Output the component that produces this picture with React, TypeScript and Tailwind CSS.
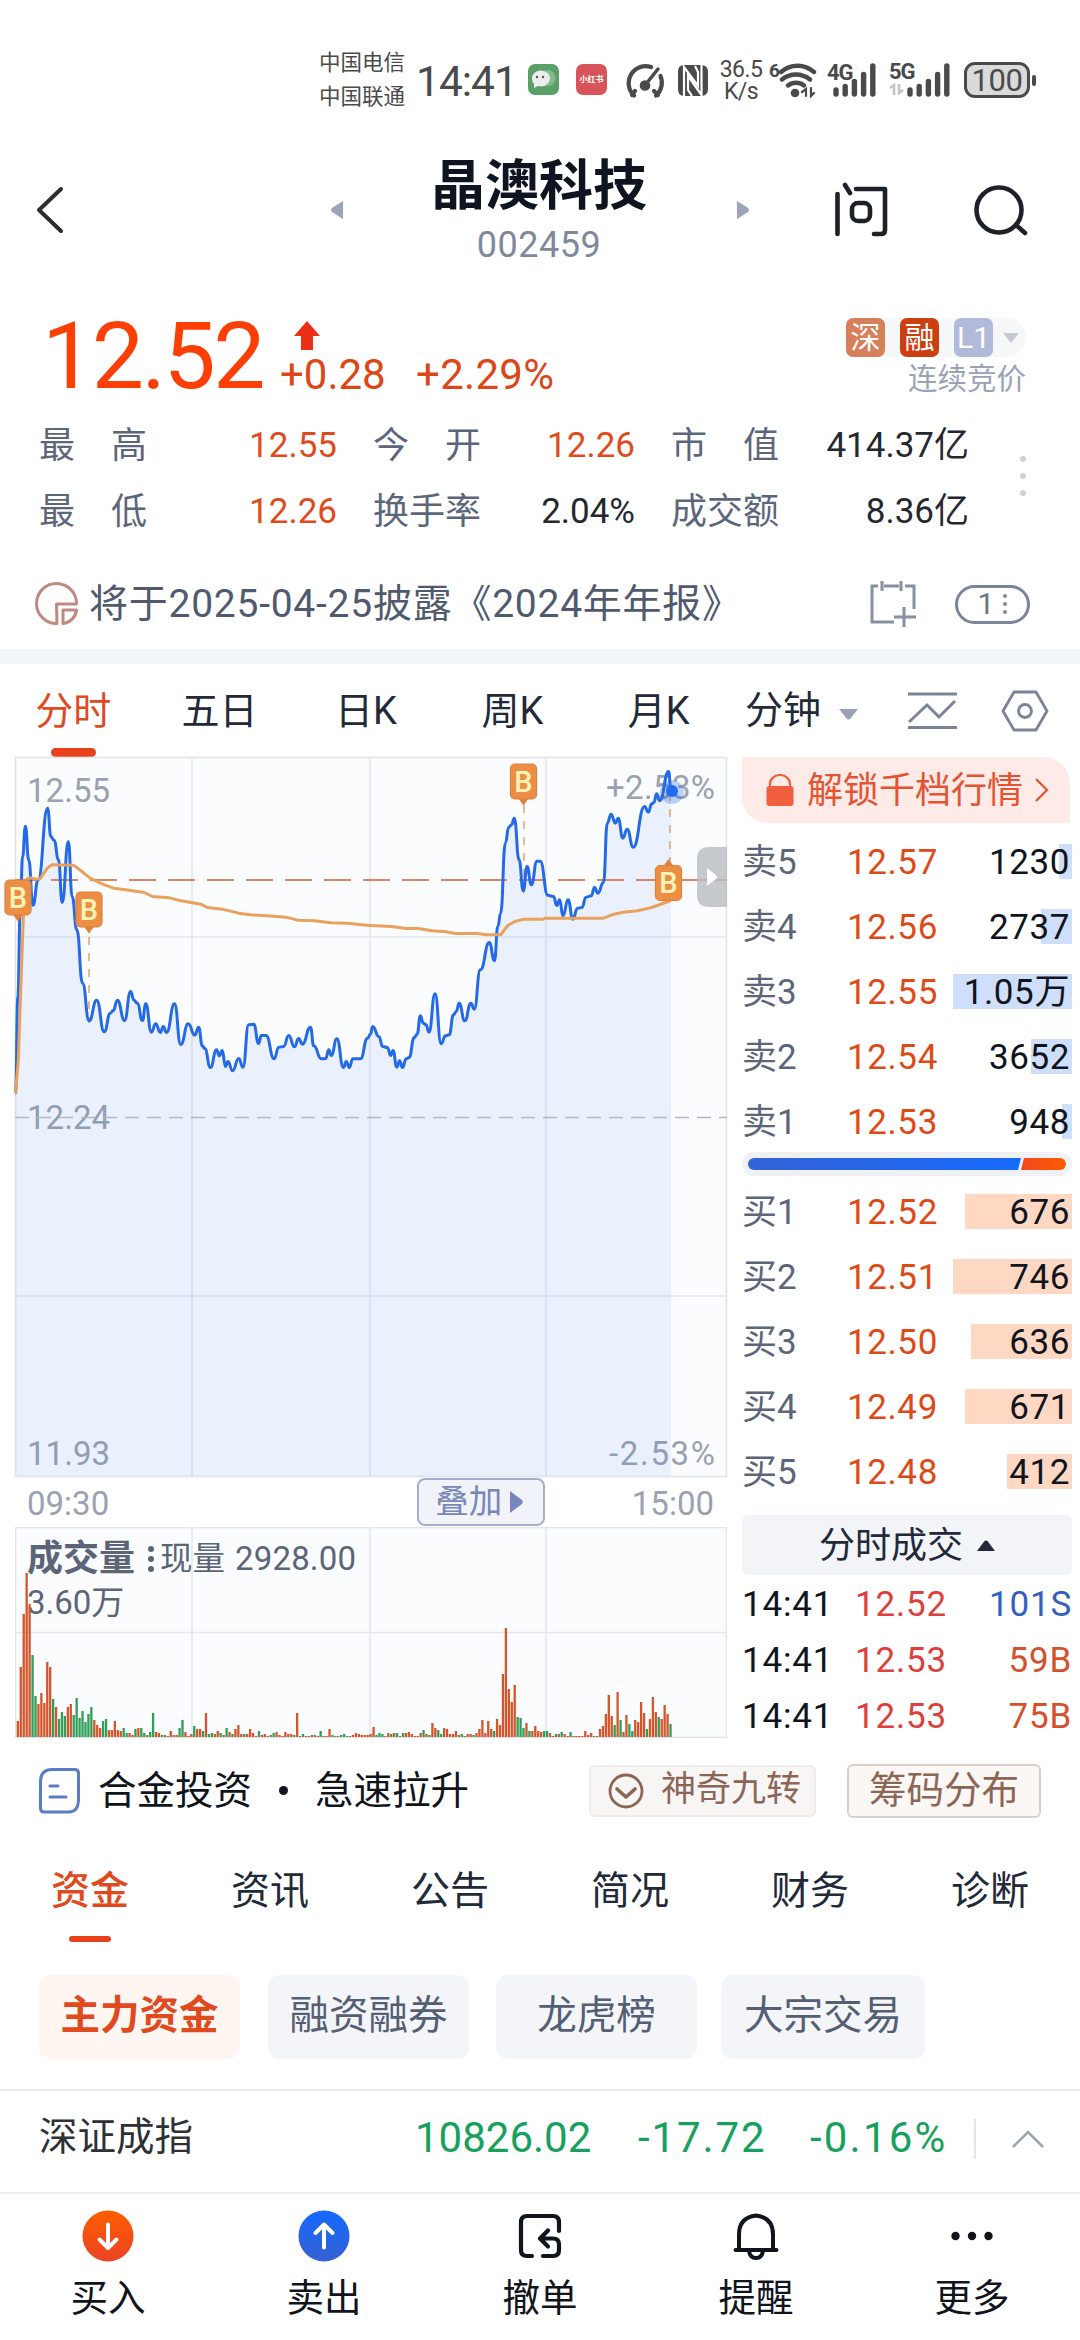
import type { ReactNode } from "react";

type Point = [number, number];

const PRICE_POINTS: Point[] = [
  [32, 1300], [37, 1010], [42, 760], [47, 590], [53, 499], [60, 600], [69, 736], [80, 660], [100, 445], [107, 530],
  [114, 542], [123, 600], [131, 728], [144, 545], [152, 710], [162, 810], [174, 970], [188, 1083], [204, 1021],
  [220, 1116], [233, 1060], [239, 1052], [248, 1021], [263, 1082], [276, 995], [283, 1021], [290, 1030], [301, 1082],
  [308, 1032], [320, 1117], [329, 1092], [339, 1118], [345, 1100], [352, 1118], [369, 1032], [382, 1154], [398, 1092],
  [412, 1126], [420, 1102], [428, 1158], [433, 1166], [445, 1223], [458, 1170], [464, 1188], [470, 1172], [477, 1220],
  [482, 1205], [492, 1233], [505, 1196], [514, 1222], [526, 1095], [537, 1093], [547, 1151], [553, 1127], [563, 1127],
  [580, 1197], [590, 1162], [600, 1160], [611, 1127], [623, 1161], [632, 1136], [640, 1153], [657, 1102], [664, 1158],
  [680, 1197], [689, 1196], [696, 1170], [701, 1187], [713, 1137], [727, 1223], [733, 1205], [739, 1223], [747, 1197],
  [763, 1197], [778, 1135], [784, 1123], [789, 1100], [802, 1130], [810, 1160], [820, 1163], [827, 1187], [832, 1172],
  [840, 1222], [846, 1203], [852, 1223], [860, 1197], [866, 1193], [877, 1133], [883, 1123], [890, 1068], [896, 1090],
  [902, 1095], [908, 1117], [921, 1002], [934, 1152], [943, 1128], [951, 1125], [960, 1065], [966, 1055], [972, 1030],
  [984, 1083], [997, 1030], [1004, 1048], [1017, 930], [1036, 848], [1047, 903], [1054, 800], [1060, 760], [1070, 550],
  [1077, 503], [1083, 495], [1089, 475], [1099, 600], [1108, 693], [1116, 620], [1125, 675], [1137, 604], [1144, 604],
  [1160, 706], [1172, 710], [1179, 737], [1185, 720], [1192, 768], [1203, 720], [1213, 778], [1223, 745], [1232, 743],
  [1241, 712], [1252, 708], [1259, 683], [1266, 700], [1278, 668], [1286, 490], [1294, 463], [1303, 490], [1309, 475],
  [1319, 535], [1328, 508], [1341, 562], [1365, 440], [1373, 457], [1380, 432], [1385, 428], [1390, 403], [1397, 423],
  [1416, 335], [1421, 395],
];

const AVERAGE_POINTS: Point[] = [
  [32, 1300], [38, 1200], [44, 950], [50, 720], [56, 658], [63, 654], [75, 658], [84, 657], [92, 640], [100, 624],
  [110, 615], [155, 616], [170, 632], [190, 655], [215, 672], [240, 685], [265, 690], [305, 698], [322, 710], [358, 714],
  [380, 722], [425, 733], [438, 743], [470, 748], [505, 760], [530, 765], [565, 768], [605, 772], [630, 781], [665, 783],
  [700, 789], [735, 790], [765, 795], [785, 797], [828, 800], [860, 806], [885, 806], [915, 813], [940, 815], [965, 821],
  [1010, 821], [1030, 825], [1060, 825], [1067, 812], [1075, 797], [1090, 785], [1110, 778], [1150, 778], [1155, 775],
  [1278, 775], [1300, 763], [1320, 757], [1350, 753], [1380, 743], [1421, 722],
];

// r = up tick, g = down tick, one entry per minute
const VOLUMES =
  "r16 r70 r123 r164 r133 g82 g41 r33 r44 r34 r75 r70 g38 r30 g18 g25 g21 r30 r33 g22 g39 g19 g26 g15 g23 g30 r17 r12 r9 g16 g18 r7 r7 r16 r7 r6 g9 g4 r4 r2 g8 r9 g9 g4 r2 g5 g24 r5 r4 g2 r2 g1 r6 r2 r2 g9 g17 r5 r1 r3 g11 r8 r8 g6 r24 g3 g4 r3 r6 g4 r2 g9 r5 g3 r8 r12 r3 g3 r3 r8 r4 r1 g6 r2 r3 r1 g2 g4 r5 r2 r1 r5 r3 r3 g2 r24 r1 g3 r1 r1 r2 g2 r1 g6 r1 r1 r8 g2 r1 g1 g2 g3 r1 g1 r2 r4 r3 r2 r2 r2 r3 r10 g2 g4 g3 r1 r4 g3 r4 g4 r1 g4 r4 r5 r3 r1 r1 r4 g7 r3 g2 r14 r9 g7 g3 r9 r8 r3 r3 r6 r2 g3 g1 r3 r3 g2 r4 r8 r17 r4 r16 r8 g6 r18 r12 r63 r109 r48 r35 r52 g20 g19 g9 r14 g6 r6 r11 r6 r5 g6 g6 r4 r1 g3 r3 g5 r3 r1 g5 r1 r1 r1 r1 r6 r2 r4 r1 g1 r8 r11 r23 r42 r21 g12 r45 g17 r5 r22 g13 g6 r17 r15 r35 r24 g8 r18 r40 r25 g20 r18 r32 r23 g13".split(" ");

const toChart = ([x, y]: Point): Point => [(x - 32) / 2.119 + 0.5, (y - 293) / 3 + 0.5];

function smoothPath(points: Point[]) {
  const pts = points.map(toChart);
  return pts.reduce((d, [x, y], i) => {
    if (i === 0) return `M${x} ${y}`;
    const [px, py] = pts[i - 1];
    const mid = (px + x) / 2;
    return `${d} C${mid} ${py} ${mid} ${y} ${x} ${y}`;
  }, "");
}

const pricePath = smoothPath(PRICE_POINTS);
const averagePath = AVERAGE_POINTS.map(toChart).map(([x, y], i) => `${i ? "L" : "M"}${x} ${y}`).join(" ");

const STATS = [
  { label: "最高", value: "12.55", up: true },
  { label: "今开", value: "12.26", up: true },
  { label: "市值", value: "414.37亿" },
  { label: "最低", value: "12.26", up: true },
  { label: "换手率", value: "2.04%" },
  { label: "成交额", value: "8.36亿" },
];

const SELLS = [
  { label: "卖5", price: "12.57", amount: "1230", bar: 13 },
  { label: "卖4", price: "12.56", amount: "2737", bar: 31 },
  { label: "卖3", price: "12.55", amount: "1.05万", bar: 119 },
  { label: "卖2", price: "12.54", amount: "3652", bar: 41 },
  { label: "卖1", price: "12.53", amount: "948", bar: 10 },
];

const BUYS = [
  { label: "买1", price: "12.52", amount: "676", bar: 107 },
  { label: "买2", price: "12.51", amount: "746", bar: 119 },
  { label: "买3", price: "12.50", amount: "636", bar: 101 },
  { label: "买4", price: "12.49", amount: "671", bar: 107 },
  { label: "买5", price: "12.48", amount: "412", bar: 65 },
];

const DEALS = [
  { time: "14:41", price: "12.52", amount: "101S", sell: true },
  { time: "14:41", price: "12.53", amount: "59B" },
  { time: "14:41", price: "12.53", amount: "75B" },
];

const PERIODS = ["分时", "五日", "日K", "周K", "月K"];
const SECTIONS = ["资金", "资讯", "公告", "简况", "财务", "诊断"];

function SignalBars() {
  return (
    <svg width="44" height="34" viewBox="0 0 44 34" stroke="#4a4a4a" strokeWidth="5.4" strokeLinecap="round">
      <path d="M3 31V27M12.2 31V23.5M21.4 31V18.5M30.6 31V11.5M39.8 31V3" />
    </svg>
  );
}

function StatusBar() {
  return (
    <div className="flex h-[130px] pl-[319px] pt-[46px] text-[#4a4a4a]">
      <div className="flex w-[97px] flex-col text-[21.5px] leading-[34px]">
        <span>中国电信</span>
        <span>中国联通</span>
      </div>
      <span className="mt-[12px] w-[112px] text-[42.5px] leading-[48px] tracking-[-1px]">14:41</span>
      <svg className="mt-[18px]" width="32" height="32" viewBox="0 0 32 32">
        <rect width="31" height="31" rx="7" fill="#5aa068" />
        <circle cx="19.500" cy="14" r="8" fill="#83bd8e" />
        <path d="M4 15a9 8 0 1 1 6 7l-4 2v-4a8 8 0 0 1-2-5z" fill="#eceeea" />
        <circle cx="9" cy="13" r="1.200" fill="#555" />
        <circle cx="15" cy="13" r="1.200" fill="#555" />
      </svg>
      <div className="ml-[16px] mt-[18px] flex size-[31px] items-center justify-center rounded-[7px] bg-[#d9545a] text-[8px] font-bold text-white">
        小红书
      </div>
      <svg className="ml-[18px] mt-[17px]" width="40" height="36" viewBox="0 0 40 36" fill="none" stroke="#4a4a4a" strokeWidth="4.200" strokeLinecap="round">
        <path d="M9 32.500A17 17 0 0 1 26 4" />
        <path d="M35.500 13A17 17 0 0 1 31 32.500M7 32l3-4M33 32l-4-4" />
        <path d="M33 6L21 21" strokeWidth="3.500" />
        <circle cx="20" cy="22.500" r="3.200" fill="#4a4a4a" />
      </svg>
      <svg className="ml-3 mt-[18px]" width="32" height="33" viewBox="0 0 32 33">
        <path d="M7 1h17q7 0 7 7v17q0 7-7 7H7q-6 0-6-7V8q0-7 6-7z" fill="#4a4a4a" />
        <path d="M7 32V3l14 19V8l-3-6M24.500 0V31L11 12v14l4 6" fill="none" stroke="#fff" strokeWidth="2.200" />
      </svg>
      <div className="ml-[9px] mt-[13px] w-[46px] text-center text-[23px] leading-[22px] tracking-[-0.600px]">
        <div>36.5</div>
        <div>K/s</div>
      </div>
      <span className="ml-[5px] mt-[14px] w-[11px] text-[19px] font-bold leading-[22px]">6</span>
      <svg className="-ml-[2px] mt-[17px]" width="40" height="35" viewBox="0 0 40 35" fill="none" stroke="#4a4a4a" strokeWidth="4.400" strokeLinecap="round">
        <path d="M3 9a25 25 0 0 1 33 0M4 16.500a22 22 0 0 1 28 0M10 22.500a13 13 0 0 1 16 0" />
        <circle cx="17" cy="30" r="2.800" fill="#4a4a4a" strokeWidth="3" />
        <path d="M24 29l4-3v7M33 25v8l3-3" strokeWidth="2.200" />
      </svg>
      <div className="ml-[9px] flex w-[52px]">
        <span className="mt-[14px] text-[22px] font-bold leading-[26px] tracking-[-1px]">4G</span>
        <div className="-ml-[20px] mt-[17px]">
          <SignalBars />
        </div>
      </div>
      <div className="ml-[10px] flex w-[75px]">
        <div className="mt-[14px] flex flex-col">
          <span className="text-[22px] font-bold leading-[23px] tracking-[-1px]">5G</span>
          <svg width="16" height="12" viewBox="0 0 16 12" fill="none" stroke="#c4c4c4" strokeWidth="2.600">
            <path d="M1 5l4-3v10M10 1v9l4-3" />
          </svg>
        </div>
        <div className="-ml-[8px] mt-[17px]">
          <SignalBars />
        </div>
      </div>
      <div className="mt-[16px] flex h-[36px] w-[66px] items-center justify-center rounded-[11px] border-[3px] border-[#4a4a4a] bg-[#dadada] text-[31px] leading-none tracking-[-0.500px]">
        100
      </div>
      <div className="ml-[2px] mt-[29px] h-[11px] w-[4px] rounded-full bg-[#4a4a4a]" />
    </div>
  );
}

function Header() {
  return (
    <header className="flex h-[160px] items-center">
      <svg className="ml-[36px]" width="28" height="48" viewBox="0 0 28 48" fill="none" stroke="#2b2d31" strokeWidth="4" strokeLinecap="round" strokeLinejoin="round">
        <path d="M25 3L3 24l22 21" />
      </svg>
      <svg className="ml-[267px]" width="12" height="18" viewBox="0 0 12 18" fill="#9ca5b8">
        <path d="M12 0v18L1 11q-2-2 0-4z" />
      </svg>
      <div className="mx-[87px] flex w-[218px] flex-col items-center">
        <h1 className="whitespace-nowrap text-[54px] font-bold leading-[66px] text-[#0e1420]">晶澳科技</h1>
        <span className="mt-[3px] text-[36px] leading-[44px] tracking-[0.500px] text-[#7f899b]">002459</span>
      </div>
      <svg className="ml-[2px]" width="12" height="18" viewBox="0 0 12 18" fill="#9ca5b8">
        <path d="M0 0v18L11 11q2-2 0-4z" />
      </svg>
      <svg className="ml-[85px]" width="54" height="56" viewBox="0 0 54 56" fill="none" stroke="#1d2128" strokeWidth="4.600" strokeLinecap="round" strokeLinejoin="round">
        <path d="M3.500 12V52M11 3l5 8M22 7h29v41q0 4-4 4h-7" />
        <rect x="18" y="21" width="18" height="18" rx="6" />
      </svg>
      <svg className="ml-[85px]" width="56" height="52" viewBox="0 0 56 52" fill="none" stroke="#1d2128" strokeWidth="4.600" strokeLinecap="round">
        <circle cx="26" cy="26" r="22.500" />
        <path d="M43 41l9 8" />
      </svg>
    </header>
  );
}

function Quote() {
  return (
    <section className="h-[359px]">
      <div className="flex h-[117px]">
        <span className="ml-[42px] mt-[12px] w-[238px] text-[93px] leading-[110px] tracking-[-2.500px] text-[#fd3f05]">12.52</span>
        <div className="flex flex-col text-[#dd4718]">
          <svg className="ml-[14px] mt-[31px]" width="26" height="30" viewBox="0 0 26 30" fill="#ec2f17">
            <path d="M13 0l13 15h-7v14H7V15H0z" />
          </svg>
          <div className="flex text-[42px] leading-[48px]">
            <span className="w-[136px]">+0.28</span>
            <span className="tracking-[0.300px]">+2.29%</span>
          </div>
        </div>
        <div className="ml-auto mr-[54px] flex flex-col items-end pt-[28px]">
          <div className="flex h-[39px] w-[180px] items-center gap-[15px] rounded-full bg-[#f6f7f9] text-[30px] leading-none text-white">
            <span className="flex h-[39px] w-[39px] items-center justify-center rounded-[7px] bg-[#d5805a]">深</span>
            <span className="flex h-[39px] w-[39px] items-center justify-center rounded-[7px] bg-[#cc3f10]">融</span>
            <span className="flex h-[39px] w-[39px] items-center justify-center rounded-[7px] bg-[#b2badb]">L1</span>
            <svg className="-ml-[5px]" width="16" height="10" viewBox="0 0 16 10" fill="#c5c9d3">
              <path d="M0 0h16L8 10z" />
            </svg>
          </div>
          <span className="mt-[4px] text-[29.500px] leading-[36px] text-[#9aa3b5]">连续竞价</span>
        </div>
      </div>
      <div className="flex h-[144px] pt-[6px]">
        <div className="grid w-[969px] grid-cols-[337px_298px_334px] grid-rows-[66px_66px] text-[36px]">
          {STATS.map((stat, i) => (
            <div key={stat.label} className={`flex items-center ${i % 3 === 0 ? "pl-[39px]" : "pl-[36px]"}`}>
              <span className="flex w-[108px] justify-between text-[#5c667a]">
                {stat.label.split("").map((char) => (
                  <span key={char}>{char}</span>
                ))}
              </span>
              <span className={`ml-auto text-[35px] ${stat.up ? "text-[#e04a1c]" : "text-[#25282e]"}`}>{stat.value}</span>
            </div>
          ))}
        </div>
        <div className="ml-[51px] mt-[43px] flex flex-col gap-[11px]">
          <i className="size-[6px] rounded-full bg-[#ccd1da]" />
          <i className="size-[6px] rounded-full bg-[#ccd1da]" />
          <i className="size-[6px] rounded-full bg-[#ccd1da]" />
        </div>
      </div>
      <div className="flex h-[98px] items-center pt-[8px] text-[39px] text-[#505a6e]">
        <svg className="ml-[35px] mr-[10px] shrink-0" width="44" height="44" viewBox="0 0 44 44" fill="none" stroke="#c08a84" strokeWidth="3" strokeLinejoin="round">
          <path d="M22 41.500A20 20 0 1 1 41.500 22H21.500z" />
          <path d="M28 28h13.500a15 15 0 0 1-13.500 13.500z" />
        </svg>
        <span className="whitespace-nowrap tracking-[0.750px]">将于2025-04-25披露《2024年年报》</span>
        <svg className="ml-auto mr-[37px]" width="48" height="46" viewBox="0 0 48 46" fill="none" stroke="#8790a2" strokeWidth="3">
          <path d="M8 5H2v36h22M14 5h15M35 5h9v23M12 0v10M31 0v10M34 26v20M24 36h22" />
        </svg>
        <div className="mr-[50px] flex h-[39px] w-[75px] items-center justify-center gap-[9px] rounded-full border-[3px] border-[#7b8599] text-[30px] leading-none text-[#6a7488]">
          1
          <span className="flex flex-col gap-[4px]">
            <i className="size-[4px] rounded-full bg-[#7b8599]" />
            <i className="size-[4px] rounded-full bg-[#7b8599]" />
            <i className="size-[4px] rounded-full bg-[#7b8599]" />
          </span>
        </div>
      </div>
    </section>
  );
}

function PeriodTabs() {
  return (
    <div className="flex h-[93px] text-[38px] text-[#222938]">
      <div className="grid w-[732px] grid-cols-5">
        {PERIODS.map((period, i) => (
          <div key={period} className="flex flex-col items-center pt-[19px]">
            <span className={`leading-[56px] ${i === 0 ? "text-[#e04a20]" : ""}`}>{period}</span>
            {i === 0 && <span className="mt-[9px] h-[9px] w-[45px] rounded-full bg-[#e8421c]" />}
          </div>
        ))}
      </div>
      <div className="flex h-[93px] items-center pl-[13px]">
        <span>分钟</span>
        <svg className="ml-[18px] mt-[8px]" width="19" height="11" viewBox="0 0 19 11" fill="#9aa3b5">
          <path d="M0 0h19l-8 10q-1.500 1-3 0z" />
        </svg>
        <svg className="ml-[50px]" width="49" height="38" viewBox="0 0 49 38" fill="none" stroke="#7b8496" strokeWidth="3">
          <path d="M0 2h49M0 35.500h49M1 30L19 13l12 12L47 9" />
        </svg>
        <svg className="ml-[44px]" width="48" height="42" viewBox="0 0 48 42" fill="none" stroke="#7b8496" strokeWidth="2.800" strokeLinejoin="round">
          <path d="M13 2h22l11 19-11 19H13L2 21z" />
          <circle cx="24" cy="21" r="6.500" />
        </svg>
      </div>
    </div>
  );
}

function Marker({ x, y, flip }: { x: number; y: number; flip?: boolean }) {
  return (
    <g transform={`translate(${x} ${y})`}>
      <path d={flip ? "M-5 -17L0 -24L5 -17z" : "M-5 17L0 24L5 17z"} fill="#e07f3c" />
      <rect x="-13" y="-17.500" width="26" height="35" rx="4.500" fill="#ec8f45" stroke="#e0803f" strokeWidth="1.200" />
      <text y="10" textAnchor="middle" fontSize="29" fontWeight="500" fill="#fff3b8">
        B
      </text>
    </g>
  );
}

function PriceChart() {
  return (
    <svg className="block overflow-visible" width="712" height="720" viewBox="0 0 712 720">
      <rect x="0.500" y="0.500" width="711" height="719" fill="#fbfcfe" stroke="#e2e4ea" strokeWidth="1.600" />
      <g fontSize="33" fill="#9aa1b1">
        <text x="12" y="45" textLength="83">12.55</text>
        <text x="12" y="372" textLength="83">12.24</text>
        <text x="12" y="708" textLength="83">11.93</text>
        <text x="700" y="42" textAnchor="end" textLength="109">+2.53%</text>
        <text x="700" y="708" textAnchor="end" textLength="106">-2.53%</text>
      </g>
      <path d="M177 0V720M355 0V720M531 0V720M0 180H712M0 539H712" stroke="#e4e6ec" strokeWidth="1.600" />
      <path d={`${pricePath} V719H1z`} fill="#2468e6" fillOpacity="0.075" />
      <path d="M0 360.500H712" stroke="#b4b8c2" strokeWidth="1.600" strokeDasharray="14 8" />
      <path d="M0 123H712" stroke="#dd8560" strokeWidth="2" strokeDasharray="27 12" strokeDashoffset="3" />
      <path d="M687 123h24" stroke="#dd8560" strokeWidth="2" />
      <path d="M74 180V266M509 48V138M655 20V104" stroke="#e0a878" strokeWidth="1.600" strokeDasharray="8 8" />
      <path d={pricePath} fill="none" stroke="#246ae6" strokeWidth="3" strokeLinejoin="round" />
      <path d={averagePath} fill="none" stroke="#e9a15c" strokeWidth="3" strokeLinejoin="round" />
      <circle cx="657" cy="35" r="12" fill="#246ae6" fillOpacity="0.300" />
      <circle cx="657" cy="34" r="6" fill="#1f6bf2" />
      <Marker x={3} y={140.500} />
      <Marker x={74} y={152.500} />
      <Marker x={508.500} y={24.500} />
      <Marker x={653.500} y={126} flip />
      <path d="M712 90h-18q-12 0-12 12v36q0 12 12 12h18z" fill="#b9bcc0" fillOpacity="0.800" />
      <path d="M692 111v18l9-7q2-2 0-4z" fill="#fff" />
    </svg>
  );
}

function VolumeChart() {
  return (
    <svg className="block" width="712" height="211" viewBox="0 0 712 211">
      <rect x="0.500" y="0.500" width="711" height="210" fill="#fbfcfe" stroke="#e2e4ea" strokeWidth="1.600" />
      <path d="M177 0V211M355 0V211M531 0V211M0 105.500H712" stroke="#e4e6ec" strokeWidth="1.600" />
      <g fill="#5c6578">
        <text x="12" y="44" fontSize="36" fontWeight="700">成交量</text>
        <circle cx="136" cy="22" r="3" />
        <circle cx="136" cy="32" r="3" />
        <circle cx="136" cy="42" r="3" />
        <text x="145" y="43" fontSize="32.500">现量</text>
        <text x="220" y="43" fontSize="33" textLength="121">2928.00</text>
        <text x="12" y="87" fontSize="33">3.60万</text>
      </g>
      {VOLUMES.map((entry, i) => {
        const height = Number(entry.slice(1));
        return (
          <rect
            key={i}
            x={1.7 + i * 2.94}
            y={210 - height}
            width="2.3"
            height={height}
            fill={entry[0] === "r" ? "#d4552a" : "#2f9e57"}
          />
        );
      })}
    </svg>
  );
}

function BookRow({ label, price, amount, bar, barColor }: { label: string; price: string; amount: string; bar: number; barColor: string }) {
  return (
    <div className="flex h-[65px] items-center text-[35px]">
      <span className="w-[105px] pt-[4px] text-[#5c667a]">{label}</span>
      <span className="pt-[4px] tracking-[0.600px] text-[#dd4a18]">{price}</span>
      {/* depth bar sits behind the amount */}
      <div className="relative ml-auto flex h-[36px] items-center justify-end pr-[2px] text-[#10141d]">
        <span className={`absolute right-0 top-0 h-[35px] ${barColor}`} style={{ width: bar }} />
        <span className="relative pt-[4px] tracking-[0.600px]">{amount}</span>
      </div>
    </div>
  );
}

function OrderBook() {
  return (
    <div className="ml-[15px] w-[330px]">
      <div className="mr-[2px] flex h-[66px] items-center rounded-bl-[26px] rounded-tr-[26px] bg-[#feeae6] text-[36px] text-[#e25434]">
        <svg className="ml-[24px] mr-[13px]" width="28" height="32" viewBox="0 0 28 32">
          <path d="M4 13V10a10 9 0 0 1 20 0v3" fill="none" stroke="#f0603e" strokeWidth="2.200" />
          <rect x="0.500" y="12" width="27" height="20" rx="3" fill="#f0603e" />
        </svg>
        <span className="pt-[2px]">解锁千档行情</span>
        <svg className="ml-[12px]" width="14" height="24" viewBox="0 0 14 24" fill="none" stroke="#e25434" strokeWidth="2.200">
          <path d="M1 1l11 11L1 23" />
        </svg>
      </div>
      <div className="pt-[6px]">
        {SELLS.map((row) => (
          <BookRow key={row.label} {...row} barColor="bg-[#cfdffb]" />
        ))}
      </div>
      <div className="-mt-[2px] flex h-[24px] items-center rounded-full bg-[#eff1f5] px-[6px]">
        <svg width="318" height="12" viewBox="0 0 318 12">
          <defs>
            <linearGradient id="sell">
              <stop offset="0" stopColor="#3564d6" />
              <stop offset="1" stopColor="#166aff" />
            </linearGradient>
            <linearGradient id="buy">
              <stop offset="0" stopColor="#ee4a20" />
              <stop offset="1" stopColor="#ff5c00" />
            </linearGradient>
          </defs>
          <path d="M6 0H273L270 12H6A6 6 0 0 1 6 0z" fill="url(#sell)" />
          <path d="M276 0H312a6 6 0 0 1 0 12H273z" fill="url(#buy)" />
        </svg>
      </div>
      <div className="pt-[3px]">
        {BUYS.map((row) => (
          <BookRow key={row.label} {...row} barColor="bg-[#fed8c3]" />
        ))}
      </div>
      <div className="mt-[11px] flex h-[60px] items-center justify-center gap-[14px] rounded-[6px] bg-[#f2f4f8] text-[36px] text-[#222938]">
        <span className="pt-[2px]">分时成交</span>
        <svg width="18" height="11" viewBox="0 0 18 11" fill="#222938">
          <path d="M0 11h18L10.500 1q-1.500-1-3 0z" />
        </svg>
      </div>
      <div className="pt-[2px]">
        {DEALS.map((deal, i) => (
          <div key={i} className="flex h-[56px] items-center text-[35px] tracking-[0.800px]">
            <span className="w-[113px] text-[#10141d]">{deal.time}</span>
            <span className="text-[#dd3f3c]">{deal.price}</span>
            <span className={`ml-auto ${deal.sell ? "text-[#345fc0]" : "text-[#d5502c]"}`}>{deal.amount}</span>
          </div>
        ))}
      </div>
    </div>
  );
}

function Ticker() {
  return (
    <div className="flex h-[107px] items-center pb-[2px] text-[38.500px]">
      <svg className="ml-[39px] mr-[18px]" width="41" height="46" viewBox="0 0 41 46" fill="none" stroke="#5a7cc4" strokeWidth="3" strokeLinecap="round">
        <path d="M13 1.500H36q3.500 0 3.500 4V31q0 13-10 13H5q-3.500 0-3.500-4V14Q1.500 1.500 13 1.500z" />
        <path d="M11 18h8M11 29h16" />
      </svg>
      <span className="whitespace-nowrap text-[#10141d]">合金投资</span>
      <i className="mx-[27px] size-[9px] rounded-full bg-[#10141d]" />
      <span className="whitespace-nowrap text-[#10141d]">急速拉升</span>
      <div className="ml-auto flex h-[52px] items-center rounded-[6px] border-2 border-[#f0ecec] bg-[#f8f5f5] pl-[17px] pr-[13px] text-[35px] text-[#8d6555]">
        <svg className="mr-[17px]" width="36" height="36" viewBox="0 0 36 36" fill="none" stroke="#8d6555" strokeWidth="2.800" strokeLinecap="round" strokeLinejoin="round">
          <circle cx="18" cy="18" r="16" />
          <path d="M9 16l9 8 9-8" strokeWidth="3.600" />
        </svg>
        神奇九转
      </div>
      <div className="ml-[31px] mr-[39px] flex h-[54px] w-[194px] items-center justify-center rounded-[6px] border-2 border-[#dccfca] bg-[#fbf7f5] text-[37.500px] text-[#8d6555]">
        筹码分布
      </div>
    </div>
  );
}

function Sections() {
  return (
    <section className="h-[244px]">
      <div className="grid h-[130px] grid-cols-6 text-[39px] text-[#222938]">
        {SECTIONS.map((section, i) => (
          <div key={section} className="flex flex-col items-center pt-[17px]">
            <span className={`leading-[58px] ${i === 0 ? "font-medium text-[#e04a20]" : ""}`}>{section}</span>
            {i === 0 && <span className="mt-[16px] h-[6px] w-[42px] rounded-full bg-[#e8421c]" />}
          </div>
        ))}
      </div>
      <div className="flex h-[84px] pl-[39px] text-[39.500px] text-[#555f73]">
        <span className="flex w-[201px] items-center justify-center rounded-[12px] bg-[#fff6f1] pb-[3px] font-bold text-[#e04a20]">主力资金</span>
        <span className="ml-[28px] flex w-[201px] items-center justify-center rounded-[12px] bg-[#f3f5f9] pb-[3px]">融资融券</span>
        <span className="ml-[27px] flex w-[201px] items-center justify-center rounded-[12px] bg-[#f3f5f9] pb-[3px]">龙虎榜</span>
        <span className="ml-[24px] flex w-[204px] items-center justify-center rounded-[12px] bg-[#f3f5f9] pb-[3px]">大宗交易</span>
      </div>
    </section>
  );
}

function IndexBar() {
  return (
    <div className="flex h-[103px] items-center border-t-2 border-[#e8e9ec] pb-[9px] text-[42px] text-[#18a05e]">
      <span className="ml-[39px] w-[376px] text-[38.500px] text-[#2e3036]">深证成指</span>
      <span className="w-[223px]">10826.02</span>
      <span className="w-[172px] tracking-[1.900px]">-17.72</span>
      <span className="w-[164px] tracking-[2.200px]">-0.16%</span>
      <span className="mt-[4px] h-[40px] w-[2px] bg-[#e3e5ea]" />
      <svg className="ml-[36px] mt-[4px]" width="32" height="18" viewBox="0 0 32 18" fill="none" stroke="#9aa3b5" strokeWidth="2.600">
        <path d="M1 17L16 2l15 15" />
      </svg>
    </div>
  );
}

function NavItem({ label, children }: { label: string; children: ReactNode }) {
  return (
    <div className="flex flex-1 flex-col items-center pt-[16px]">
      <svg width="52" height="52" viewBox="0 0 52 52" fill="none" strokeLinecap="round" strokeLinejoin="round">
        {children}
      </svg>
      <span className="mt-[10px] text-[37.500px] leading-[52px] text-[#10141d]">{label}</span>
    </div>
  );
}

function BottomNav() {
  return (
    <nav className="flex h-[149px] border-t-2 border-[#ececee]">
      <NavItem label="买入">
        <defs>
          <linearGradient id="in" x1="0" y1="0" x2="0" y2="1">
            <stop offset="0" stopColor="#ff5c00" />
            <stop offset="1" stopColor="#ea4424" />
          </linearGradient>
        </defs>
        <circle cx="26" cy="26" r="25.500" fill="url(#in)" />
        <path d="M26 14.500V37M17.500 29.500L26 38l8.500-8.500" stroke="#fff" strokeWidth="4" />
      </NavItem>
      <NavItem label="卖出">
        <defs>
          <linearGradient id="out" x1="0" y1="0" x2="0" y2="1">
            <stop offset="0" stopColor="#146aff" />
            <stop offset="1" stopColor="#3560d2" />
          </linearGradient>
        </defs>
        <circle cx="26" cy="26" r="25.500" fill="url(#out)" />
        <path d="M26 37.500V15M17.500 23L26 14.500 34.500 23" stroke="#fff" strokeWidth="4" />
      </NavItem>
      <NavItem label="撤单">
        <path d="M45 21V12q0-6-6-6H13Q7 6 7 12V40q0 6 6 6h5" stroke="#10141d" strokeWidth="4.200" />
        <path d="M34 20.500L26 28.500l8 8M26 28.500H39q6 0 6 6V40q0 6-6 6H29" stroke="#10141d" strokeWidth="4.200" />
      </NavItem>
      <NavItem label="提醒">
        <path d="M26 5.500q-17 2-17 19V40H43V24.500q0-17-17-19z" stroke="#10141d" strokeWidth="4" />
        <path d="M5.500 40H46.500M19 41q1 7 7 7t7-7" stroke="#10141d" strokeWidth="4" />
      </NavItem>
      <NavItem label="更多">
        <circle cx="9.500" cy="26" r="4.200" fill="#10141d" />
        <circle cx="26" cy="26" r="4.200" fill="#10141d" />
        <circle cx="42.500" cy="26" r="4.200" fill="#10141d" />
      </NavItem>
    </nav>
  );
}

export default function App() {
  return (
    <div className="h-[2340px] w-[1080px] overflow-hidden bg-white font-[Roboto,'Noto_Sans_CJK_SC',sans-serif]">
      <StatusBar />
      <Header />
      <Quote />
      <div className="h-[15px] bg-[#f4f5f9]" />
      <PeriodTabs />
      <div className="flex h-[981px]">
        <div className="ml-[15px] w-[712px] shrink-0">
          <PriceChart />
          <div className="flex h-[50px] items-center pl-[12px] pr-[13px] text-[33px] text-[#9aa1b1]">
            <span className="pt-[3px]">09:30</span>
            <div className="ml-auto flex h-[48px] w-[128px] items-center justify-center gap-[8px] rounded-[8px] border-2 border-[#a3aed0] bg-[#f2f3f9] pr-[3px] text-[33.500px] text-[#7886b8]">
              叠加
              <svg width="13" height="22" viewBox="0 0 13 22" fill="#7886c0">
                <path d="M0 0v22L12 13q1.500-2 0-4z" />
              </svg>
            </div>
            <span className="ml-[87px] pt-[3px]">15:00</span>
          </div>
          <VolumeChart />
        </div>
        <OrderBook />
      </div>
      <Ticker />
      <Sections />
      <IndexBar />
      <BottomNav />
    </div>
  );
}
